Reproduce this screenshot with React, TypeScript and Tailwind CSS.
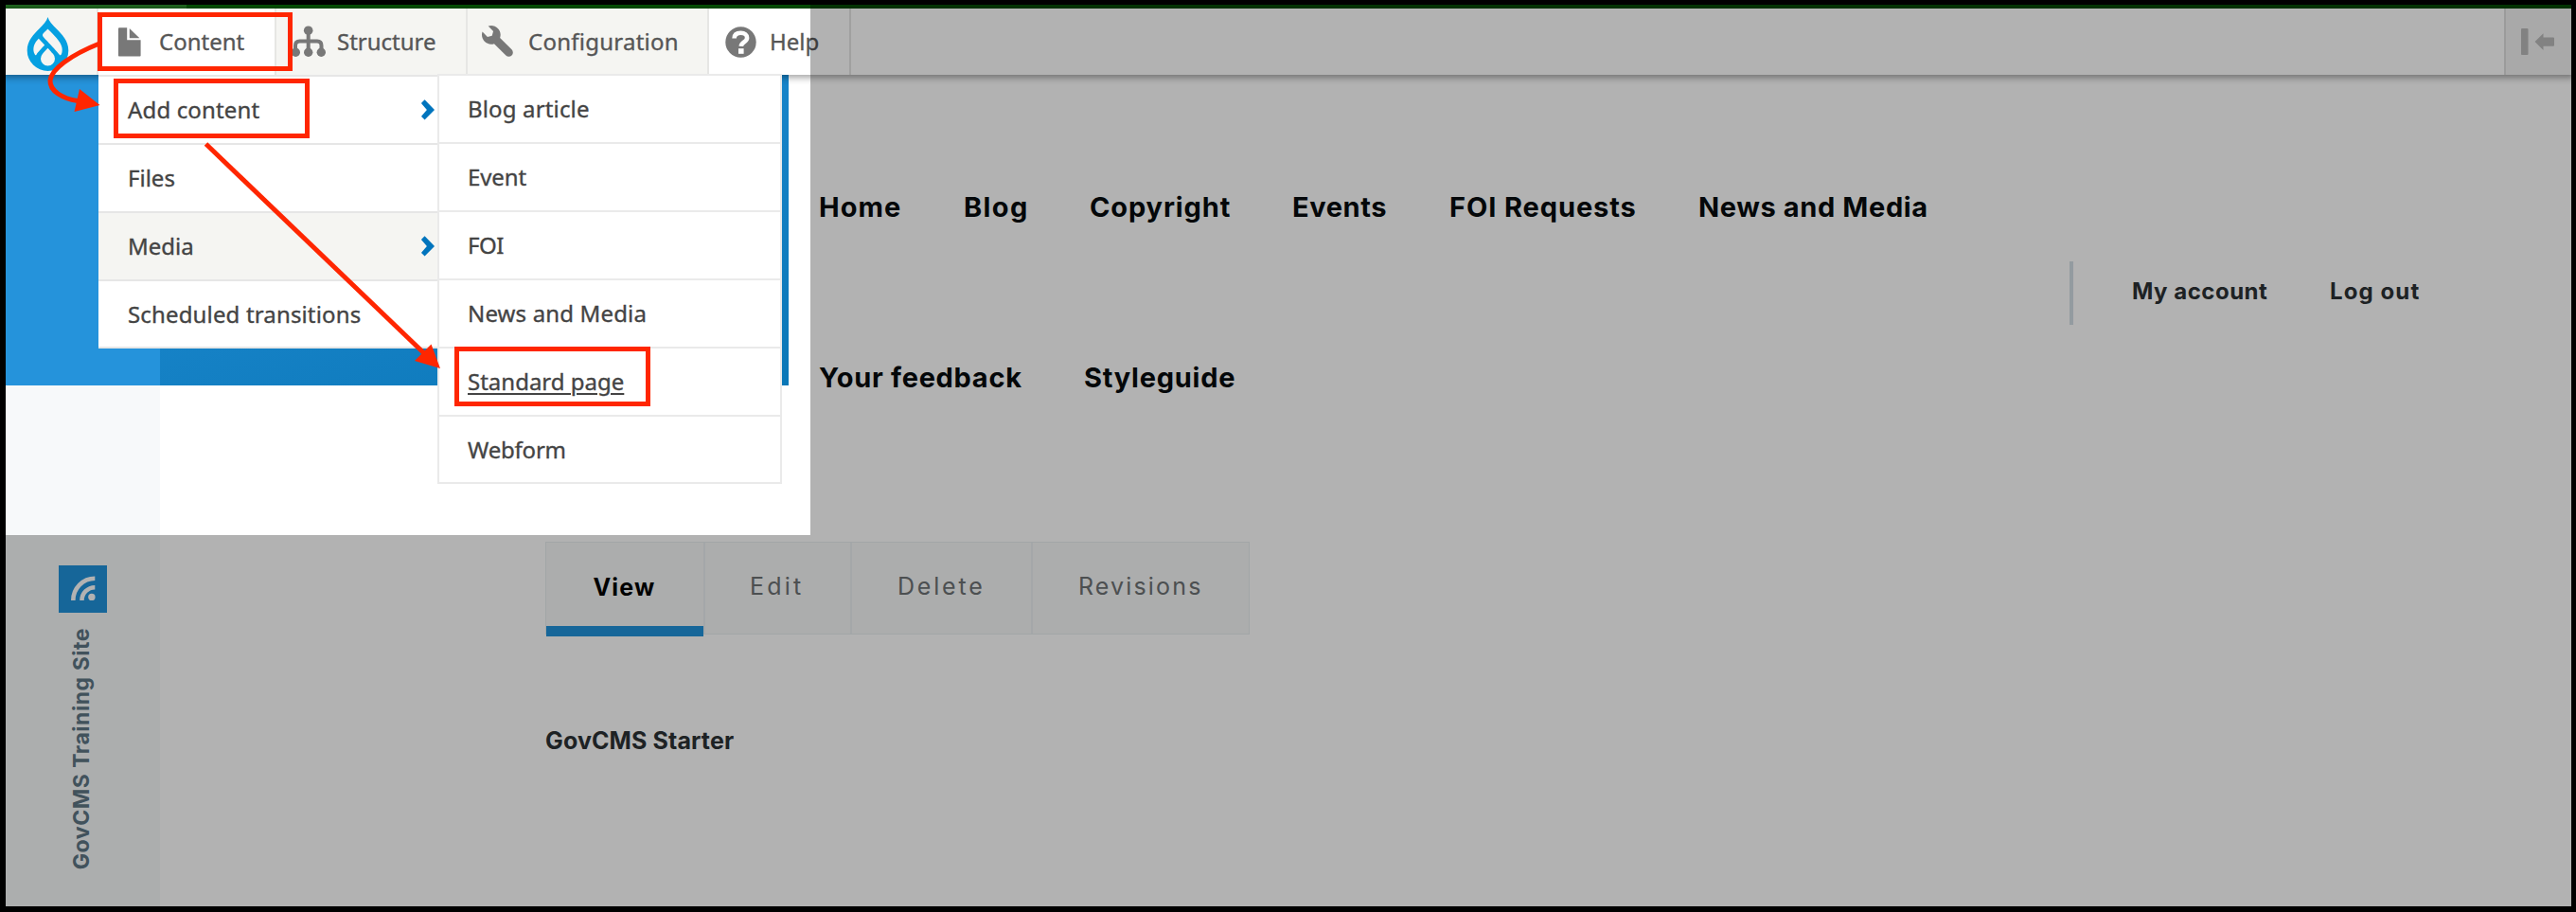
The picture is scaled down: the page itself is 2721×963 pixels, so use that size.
import type { ReactNode } from "react";

function DrupalLogo() {
  return (
    <svg viewBox="0 0 24 24" className="h-[57px] w-[57px] shrink-0" fill="#06a0e1">
      <path d="M15.78 5.113C14.09 3.425 12.48 1.815 11.998 0c-.48 1.815-2.09 3.425-3.778 5.113-2.534 2.53-5.405 5.4-5.405 9.702a9.184 9.185 0 1 0 18.368 0c0-4.303-2.871-7.171-5.405-9.702M6.72 16.954c-.563-.019-2.64-3.6 1.215-7.416l2.55 2.788a.218.218 0 0 1-.016.325c-.61.625-3.204 3.227-3.527 4.126-.066.186-.164.18-.222.177M12 21.677a3.158 3.158 0 0 1-3.158-3.159 3.291 3.291 0 0 1 .787-2.087c.57-.696 2.37-2.655 2.37-2.655s1.774 1.988 2.367 2.649a3.09 3.09 0 0 1 .792 2.093A3.158 3.158 0 0 1 12 21.677m6.046-5.123c-.068.15-.223.398-.431.405-.371.014-.411-.177-.686-.583-.604-.892-5.864-6.39-6.848-7.455-.866-.935-.122-1.595.223-1.94C10.736 6.547 12 5.285 12 5.285s3.766 3.571 5.336 6.014c1.57 2.443 1.029 4.556.71 5.256" />
    </svg>
  );
}

function FileIcon() {
  return (
    <svg viewBox="0 0 24 31" className="h-[31px] w-6 shrink-0" fill="#787878">
      <path d="M0 1.2Q0 .3 1 .3H9.2V13.3H23.6V29.8Q23.6 30.6 22.8 30.6H.8Q0 30.6 0 29.8Z" />
      <path d="M11.8 1L22.4 11.3H11.8Z" />
    </svg>
  );
}

function StructureIcon() {
  return (
    <svg viewBox="0 0 36 34" className="h-[34px] w-9 shrink-0" fill="#787878">
      <path d="M4 28V21Q4 16.500 8.500 16.500H27Q31.500 16.500 31.500 21V28M17.700 5V28" fill="none" stroke="#787878" strokeWidth="4" />
      <circle cx="17.700" cy="5.200" r="4.800" />
      <circle cx="4.300" cy="28.300" r="4.700" />
      <circle cx="17.700" cy="28.300" r="4.700" />
      <circle cx="31.300" cy="28.300" r="4.700" />
    </svg>
  );
}

function WrenchIcon() {
  return (
    <svg viewBox="0 0 16 16" className="h-[35px] w-[35px] shrink-0" fill="#787878">
      <path d="M14.416 11.586l-.01-.008v-.001l-5.656-5.656c.15-.449.252-.921.252-1.421 0-2.485-2.016-4.5-4.502-4.5-.505 0-.981.102-1.434.255l2.431 2.431-.588 2.196-2.196.588-2.445-2.445c-.162.464-.268.956-.268 1.475 0 2.486 2.014 4.5 4.5 4.5.5 0 .972-.102 1.421-.251l5.667 5.665c.781.781 2.047.781 2.828 0s.781-2.047 0-2.828z" />
    </svg>
  );
}

function HelpIcon() {
  return (
    <svg viewBox="0 0 33 33" className="h-[33px] w-[33px] shrink-0">
      <circle cx="16.500" cy="16.500" r="16.200" fill="#787878" />
      <path d="M9.600 12.600C9.600 8.500 12.300 6.800 16.500 6.800C20.700 6.800 23.100 8.800 23.100 11.900C23.100 16.300 17 16.300 16.800 20.800" fill="none" stroke="#fff" strokeWidth="4.600" />
      <rect x="14" y="23.200" width="5.600" height="5.600" fill="#fff" />
    </svg>
  );
}

function ToggleIcon() {
  return (
    <svg viewBox="0 0 36 28" className="h-7 w-9 shrink-0" fill="#bababa">
      <rect x="0" y="0" width="7.500" height="28" rx="1" />
      <path d="M14.500 14L23.500 5.200V9.500H34Q35 9.500 35 10.500V17.800Q35 18.800 34 18.800H23.500V23Z" />
    </svg>
  );
}

function FeedIcon() {
  return (
    <svg viewBox="0 0 51 50" className="h-[50px] w-[51px] shrink-0">
      <rect width="51" height="50" fill="#2092dc" />
      <path d="M15.300 37A23 23 0 0 1 38.300 13.800M24.500 37A13.800 13.800 0 0 1 38.300 23.200" fill="none" stroke="#fff" strokeWidth="4.600" />
      <circle cx="34.900" cy="33.400" r="3.700" fill="#fff" />
    </svg>
  );
}

function Chevron() {
  return (
    <svg viewBox="0 0 14 22" className="h-[22px] w-3.5 shrink-0" fill="#0074bd">
      <path d="M3.600 .3L14 10.900L3.600 21.600L.3 18.300Q0 17.900 .3 17.500L5.900 10.900L.3 4.400Q0 4 .3 3.600Z" />
    </svg>
  );
}

function ToolbarTab({ icon, label, className }: { icon: ReactNode; label: string; className: string }) {
  return (
    <div className={`flex h-full shrink-0 items-center border-r-2 border-[#e6e6e4] text-[#565656] [-webkit-text-stroke:0.35px_#565656] ${className}`}>
      {icon}
      <span>{label}</span>
    </div>
  );
}

const submenu = [
  { label: "Blog article", className: "tracking-[0.15px]" },
  { label: "Event", className: "tracking-[-0.1px]" },
  { label: "FOI", className: "tracking-[-0.5px]" },
  { label: "News and Media", className: "tracking-[0.15px]" },
  { label: "Standard page", className: "underline decoration-[2px] underline-offset-[3px]" },
  { label: "Webform", className: "tracking-[-0.2px]" },
];

const contentMenu = [
  { label: "Add content", className: "bg-white tracking-[0.15px]", expandable: true },
  { label: "Files", className: "bg-white", expandable: false },
  { label: "Media", className: "bg-[#f5f5f2]", expandable: true },
  { label: "Scheduled transitions", className: "bg-white tracking-[0.15px]", expandable: false },
];

function Menus() {
  return (
    <div className="absolute left-[98px] top-[74px] z-20 flex items-start text-[#444] [-webkit-text-stroke:0.35px_#444]">
      <ul className="w-[358px] border-t-2 border-[#e6e6e6]">
        {contentMenu.map((item) => (
          <li key={item.label} className={`flex h-[72px] items-center justify-between border-b-2 border-[#e6e6e6] pl-[31px] pr-[3px] last:h-[71px] ${item.className}`}>
            <span>{item.label}</span>
            {item.expandable && <Chevron />}
          </li>
        ))}
      </ul>
      <ul className="-mt-px w-[364px] border-2 border-b-0 border-[#eaeaea] bg-white">
        {submenu.map((item) => (
          <li key={item.label} className="flex h-[72px] items-center border-b-2 border-[#eaeaea] pl-[30px] last:h-[71px]">
            <span className={item.className}>{item.label}</span>
          </li>
        ))}
      </ul>
    </div>
  );
}

function Toolbar() {
  return (
    <header className="relative z-10 flex h-[70px] shrink-0 items-center bg-white shadow-[0_0_7px_3px_rgba(0,0,0,0.36)]">
      <div className="flex h-full w-[98px] shrink-0 items-center border-r-2 border-[#e6e6e4] bg-[#f5f5f2] pl-4 pt-1">
        <DrupalLogo />
      </div>
      <ToolbarTab icon={<FileIcon />} label="Content" className="w-[188px] gap-[19px] bg-white pl-[21px]" />
      <ToolbarTab icon={<StructureIcon />} label="Structure" className="w-[202px] gap-3 bg-[#f5f5f2] pl-4" />
      <ToolbarTab icon={<WrenchIcon />} label="Configuration" className="w-[255px] gap-[14px] bg-[#f5f5f2] pl-[15px] tracking-[0.25px]" />
      <ToolbarTab icon={<HelpIcon />} label="Help" className="w-[150px] gap-[14px] bg-white pl-[17px]" />
      <div className="ml-auto flex h-full w-[71px] items-center border-l-2 border-[#dedede] bg-[#f3f3f3] pl-4">
        <ToggleIcon />
      </div>
    </header>
  );
}

function SiteNav() {
  return (
    <nav className="pt-[104px] text-[29px] font-bold leading-[72px] text-[#060b0d]">
      <ul className="flex">
        <li className="w-[153px] tracking-[1px]">Home</li>
        <li className="w-[133px] tracking-[1.4px]">Blog</li>
        <li className="w-[214px] tracking-[0.87px]">Copyright</li>
        <li className="w-[166px] tracking-[0.6px]">Events</li>
        <li className="w-[263px] tracking-[0.9px]">FOI Requests</li>
        <li className="tracking-[0.62px]">News and Media</li>
      </ul>
      <ul className="mt-[108px] flex">
        <li className="w-[280px] tracking-[0.7px]">Your feedback</li>
        <li className="tracking-[0.75px]">Styleguide</li>
      </ul>
    </nav>
  );
}

function Tabs() {
  return (
    <div className="flex h-[98px] w-[744px] border border-[#e9eef0] bg-[#f6f8f8] text-[25px] text-[#6e7274]">
      <div className="mb-[-3px] flex w-[166px] items-center justify-center border-b-[11px] border-[#2092dc] pr-px pt-[7px] font-bold tracking-[1.2px] text-black">View</div>
      <div className="flex w-[155px] items-center border-l-2 border-[#ebeff2] pb-0.5 pl-[47px] tracking-[3.200px]">Edit</div>
      <div className="flex w-[191px] items-center border-l-2 border-[#ebeff2] pb-0.5 pl-12 tracking-[2.800px]">Delete</div>
      <div className="flex flex-1 items-center border-l-2 border-[#ebeff2] pb-0.5 pl-12 tracking-[2.150px]">Revisions</div>
    </div>
  );
}

function Annotations() {
  return (
    <>
      <div className="absolute left-[103px] top-[13px] z-40 h-[62px] w-[206px] border-[5px] border-[#ff2600]" />
      <div className="absolute left-[120px] top-[83px] z-40 h-[63px] w-[207px] border-[5px] border-[#ff2600]" />
      <div className="absolute left-[480px] top-[366px] z-40 h-[63px] w-[207px] border-[5px] border-[#ff2600]" />
      <svg viewBox="0 0 500 400" className="absolute left-0 top-0 z-40 h-[400px] w-[500px]">
        <path d="M105 46C75 58 54 73 53 85C52.500 96 66 104 82 106.500" fill="none" stroke="#ff2600" strokeWidth="5" />
        <path d="M84 94L105.500 111L78.500 118Z" fill="#ff2600" />
        <path d="M217.500 152L449 374" fill="none" stroke="#ff2600" strokeWidth="5" />
        <path d="M465 389L455.500 363.500L438 381Z" fill="#ff2600" />
      </svg>
    </>
  );
}

export default function App() {
  return (
    <div className="relative h-[963px] w-[2721px] overflow-hidden bg-black pl-[6px] pt-[5px] font-['Noto_Sans',sans-serif] text-2xl">
      <div className="relative flex h-[952px] w-[2710px] flex-col overflow-hidden bg-white">
        <div className="relative z-10 flex h-1 shrink-0 bg-[#045c04]">
          <div className="w-[191px] bg-[#247624]" />
        </div>
        <Toolbar />
        <Menus />

        <div className="flex flex-1 font-[Inter,sans-serif]">
          <aside className="flex w-[163px] shrink-0 flex-col bg-[#f7f9fa]">
            <div className="h-[328px] bg-[#2593db]" />
            <div className="flex flex-col items-start pl-14 pt-[190px]">
              <FeedIcon />
              <div className="ml-2.5 mt-4 rotate-180 whitespace-nowrap text-[23px] font-bold leading-[28px] tracking-[0.54px] text-[#5d7684] [writing-mode:vertical-rl]">
                GovCMS Training Site
              </div>
            </div>
          </aside>

          <main className="flex flex-1 flex-col">
            <div className="flex h-[328px] shrink-0">
              <div className="w-[664px] shrink-0 bg-linear-160 from-[#1f8dd6] to-[#0a77b7]" />
              <div className="w-8 shrink-0" />
              <SiteNav />
              <div className="ml-auto mt-[197px] flex h-[67px] w-[530px] items-center border-l-4 border-[#d3dfe6] pb-[3px] pl-[62px] font-bold text-[#2b3134]">
                <span className="w-[209px] tracking-[0.5px]">My account</span>
                <span className="tracking-[1.1px]">Log out</span>
              </div>
            </div>
            <div className="pl-[407px] pt-[165px]">
              <Tabs />
              <h1 className="mt-[98px] text-[25px] font-bold leading-[28px] tracking-[0.12px] text-[#2b3134]">GovCMS Starter</h1>
            </div>
          </main>
        </div>

        <div className="absolute left-0 top-0 z-30 h-[560px] w-[850px] shadow-[0_0_0_3000px_rgba(0,0,0,0.3)]" />
      </div>
      <Annotations />
    </div>
  );
}
